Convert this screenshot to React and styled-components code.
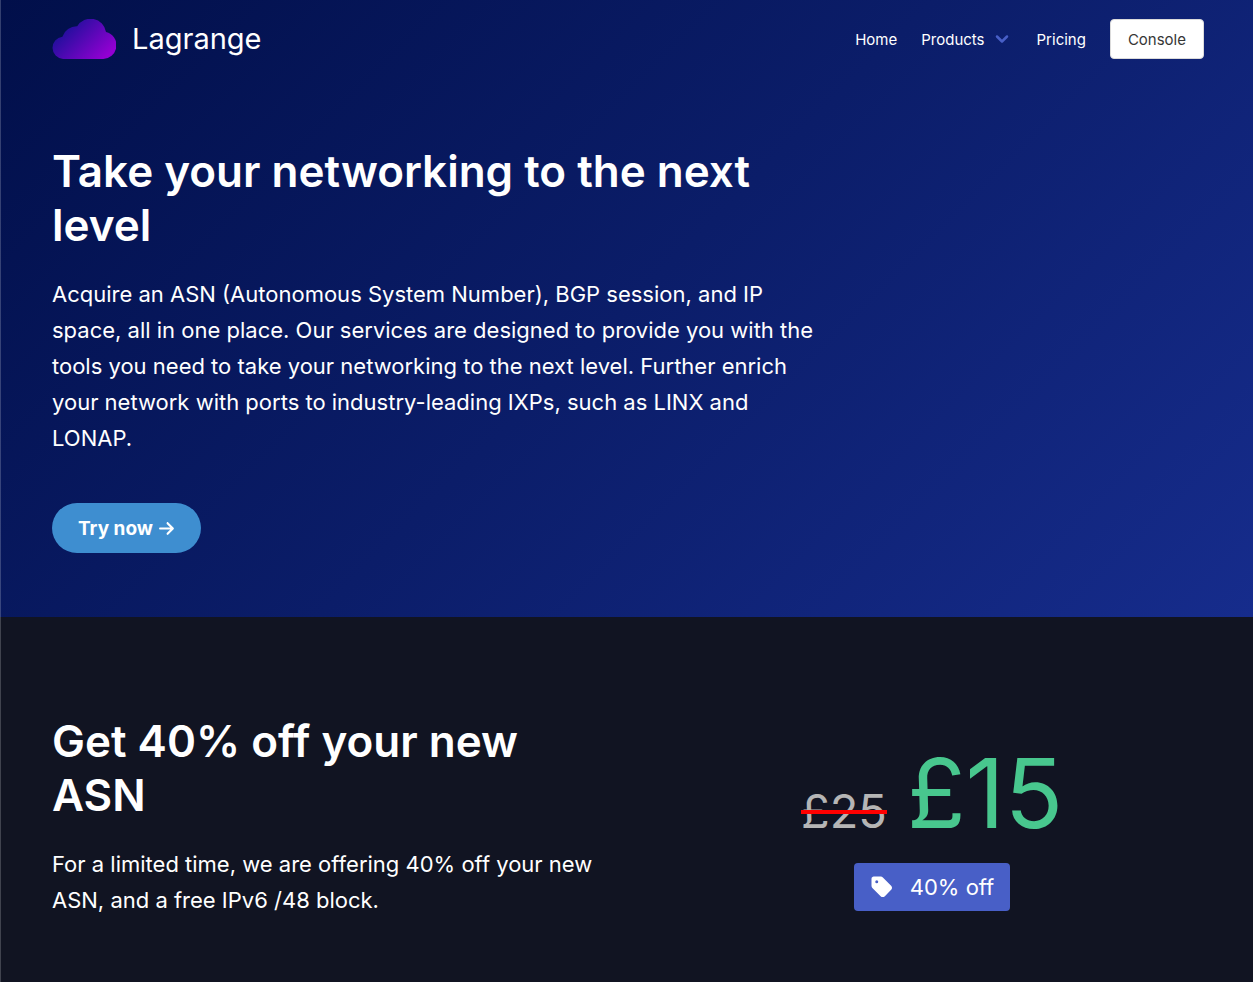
import React from "react";
import styled, { createGlobalStyle } from "styled-components";
import { FaArrowRight, FaTag } from "react-icons/fa6";

const GlobalStyle = createGlobalStyle`
  *, *::before, *::after { box-sizing: border-box; }
  body {
    margin: 0;
    background: #111422;
    color: #fff;
    font-family: Inter, "Liberation Sans", sans-serif;
    font-size: 16px;
  }
  h1, h2, p { margin: 0; }
`;

const Page = styled.div`
  display: flex;
  flex-direction: column;
  min-height: 100vh;
`;

const Hero = styled.header`
  padding: 0 49px 64px 52px;
  background: linear-gradient(135deg, #010f4a 0%, #0b1d69 50%, #162c8c 100%);
  box-shadow: inset 1px 0 rgba(255, 255, 255, 0.2);
`;

const Navbar = styled.nav`
  display: flex;
  align-items: center;
  justify-content: space-between;
  height: 78px;
`;

const Brand = styled.a`
  display: flex;
  align-items: center;
  gap: 16px;
  color: #fff;
  font-size: 29px;
  line-height: 42px;
  text-decoration: none;
`;

const NavItems = styled.div`
  display: flex;
  align-items: center;
  gap: 24px;
`;

const NavLink = styled.a`
  display: flex;
  align-items: center;
  color: #fff;
  font-size: 15px;
  line-height: 25px;
  text-decoration: none;
`;

const NavMenuButton = styled.button`
  display: flex;
  align-items: center;
  gap: 10px;
  padding: 0 4px 0 0;
  border: 0;
  background: none;
  color: #fff;
  font: inherit;
  font-size: 15px;
  line-height: 25px;
  cursor: pointer;
`;

const ConsoleButton = styled.button`
  height: 40px;
  padding: 0 17px;
  border: 1px solid #dbdbdb;
  border-radius: 4px;
  background: #fff;
  color: #363636;
  font: inherit;
  font-size: 15px;
  cursor: pointer;
`;

const Intro = styled.div`
  max-width: 768px;
  padding-top: 66px;
`;

const headingStyle = `
  font-size: 44px;
  font-weight: 600;
  line-height: 54px;
`;

const Title = styled.h1`
  ${headingStyle}
`;

const SectionTitle = styled.h2`
  ${headingStyle}
`;

const Lead = styled.p`
  margin-top: 24px;
  font-size: 22px;
  line-height: 36px;
`;

const TryButton = styled.button`
  display: inline-flex;
  align-items: center;
  gap: 5px;
  height: 50px;
  margin-top: 47px;
  padding: 0 26px;
  border: 0;
  border-radius: 25px;
  background: #3e8ed0;
  color: #fff;
  font: inherit;
  font-size: 19px;
  font-weight: 700;
  cursor: pointer;
`;

const Offer = styled.section`
  display: grid;
  grid-template-columns: 1fr 1fr;
  gap: 64px;
  flex: 1;
  align-items: start;
  padding: 97px 49px 64px 52px;
  box-shadow: inset 1px 0 rgba(255, 255, 255, 0.2);
`;

const Deal = styled.div`
  display: flex;
  flex-direction: column;
  align-items: center;
  gap: 22px;
  padding-top: 31px;
`;

const Prices = styled.div`
  display: flex;
  align-items: baseline;
  gap: 20px;
  line-height: 1;
`;

const OldPrice = styled.s`
  position: relative;
  color: #b5b5b5;
  font-size: 47px;
  text-decoration: none;

  &::after {
    content: "";
    position: absolute;
    left: 0;
    right: 0;
    top: calc(50% - 1px);
    height: 4px;
    background: #f00;
  }
`;

const NewPrice = styled.span`
  color: #48c78e;
  font-size: 96px;
`;

const Badge = styled.span`
  display: flex;
  align-items: center;
  gap: 16px;
  height: 48px;
  padding: 0 16px;
  border-radius: 4px;
  background: #485fc7;
  font-size: 22px;
`;

function CloudLogo() {
  return (
    <svg width="64" height="40" viewBox="0 0 64 40" aria-hidden="true">
      <defs>
        <linearGradient id="cloud" gradientUnits="userSpaceOnUse" x1="14" y1="6" x2="50" y2="42">
          <stop offset="0" stopColor="#1e0f9b" />
          <stop offset="1" stopColor="#9400d3" />
        </linearGradient>
      </defs>
      <path
        fill="url(#cloud)"
        d="M11 40A11.2 11.2 0 0 1 10.4 17.7A15 15 0 0 1 25.2 7.3A15.6 15.6 0 0 1 54 13A13.7 13.7 0 0 1 50.3 40Z"
      />
    </svg>
  );
}

function Chevron() {
  return (
    <svg width="14" height="10" viewBox="0 0 14 10" aria-hidden="true">
      <path
        d="M2 2.5L7 7.5L12 2.5"
        fill="none"
        stroke="#485fc7"
        strokeWidth="2.5"
        strokeLinecap="round"
        strokeLinejoin="round"
      />
    </svg>
  );
}

export default function App() {
  return (
    <Page>
      <GlobalStyle />
      <Hero>
        <Navbar>
          <Brand href="#">
            <CloudLogo />
            Lagrange
          </Brand>
          <NavItems>
            <NavLink href="#">Home</NavLink>
            <NavMenuButton type="button">
              Products
              <Chevron />
            </NavMenuButton>
            <NavLink href="#pricing">Pricing</NavLink>
            <ConsoleButton type="button">Console</ConsoleButton>
          </NavItems>
        </Navbar>
        <Intro>
          <Title>Take your networking to the next level</Title>
          <Lead>
            Acquire an ASN (Autonomous System Number), BGP session, and IP space, all in one
            place. Our services are designed to provide you with the tools you need to take your
            networking to the next level. Further enrich your network with ports to
            industry-leading IXPs, such as LINX and LONAP.
          </Lead>
          <TryButton type="button">
            Try now
            <FaArrowRight size={17} aria-hidden="true" />
          </TryButton>
        </Intro>
      </Hero>
      <Offer id="pricing">
        <div>
          <SectionTitle>Get 40% off your new ASN</SectionTitle>
          <Lead>
            For a limited time, we are offering 40% off your new ASN, and a free IPv6 /48 block.
          </Lead>
        </div>
        <Deal>
          <Prices>
            <OldPrice>£25</OldPrice>
            <NewPrice>£15</NewPrice>
          </Prices>
          <Badge>
            <FaTag size={24} aria-hidden="true" />
            40% off
          </Badge>
        </Deal>
      </Offer>
    </Page>
  );
}
